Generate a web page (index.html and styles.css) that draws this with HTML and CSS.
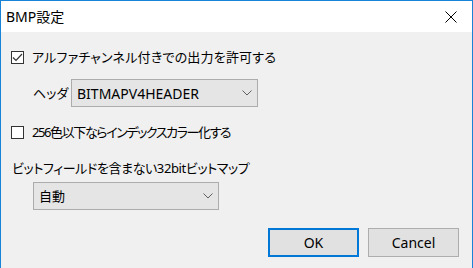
FILE: index.html
```html
<!DOCTYPE html>
<html lang="ja">

<head>
    <meta charset="UTF-8">
    <title>BMP設定</title>
    <link rel="stylesheet" href="styles.css">
</head>

<body>
    <div class="window">
        <div class="titlebar">
            <span class="title">BMP設定</span>
            <svg class="close" width="12" height="12" viewBox="0 0 12 12">
                <path d="M0.5 0.5 L11.5 11.5 M11.5 0.5 L0.5 11.5" stroke="#000" stroke-width="1" fill="none" />
            </svg>
        </div>

        <div class="content">
            <label class="check-row first">
                <span class="checkbox">
                    <svg width="11" height="11" viewBox="0 0 11 11">
                        <path d="M1 5.5 L4 8.5 L10 2" stroke="#333" stroke-width="1.2" fill="none" />
                    </svg>
                </span>
                <span class="text jp alpha">アルファチャンネル付きでの出力を許可する</span>
            </label>

            <div class="field-row">
                <span class="text jp header-label">ヘッダ</span>
                <div class="combo combo-header">
                    <span class="text">BITMAPV4HEADER</span>
                    <svg class="chevron" width="10" height="6" viewBox="0 0 10 6">
                        <path d="M0.5 0.5 L5 5 L9.5 0.5" stroke="#606060" stroke-width="1" fill="none" />
                    </svg>
                </div>
            </div>

            <label class="check-row second">
                <span class="checkbox"></span>
                <span class="text jp index">256色以下ならインデックスカラー化する</span>
            </label>

            <div class="plain-label">
                <span class="text jp bitfield">ビットフィールドを含まない32bitビットマップ</span>
            </div>

            <div class="combo combo-auto">
                <span class="text jp">自動</span>
                <svg class="chevron" width="10" height="6" viewBox="0 0 10 6">
                    <path d="M0.5 0.5 L5 5 L9.5 0.5" stroke="#606060" stroke-width="1" fill="none" />
                </svg>
            </div>

            <div class="buttons">
                <button class="btn default">OK</button>
                <button class="btn">Cancel</button>
            </div>
        </div>
    </div>
</body>

</html>
```

FILE: styles.css
```css
body {
    margin: 0;
    font-family: "Noto Sans", "Noto Sans CJK JP", sans-serif;
    font-size: 14px;
    color: #000;
    background: #f0f0f0;
}

.window {
    width: 473px;
    height: 268px;
    box-sizing: border-box;
    border: 1px solid #1883d7;
    border-bottom: none;
    background: #f0f0f0;
}

.titlebar {
    height: 31px;
    background: #fff;
    display: flex;
    align-items: center;
    justify-content: space-between;
    padding: 0 15px 0 5px;
}

.title {
    font-size: 14px;
    line-height: 18px;
    margin-top: 1px;
    font-feature-settings: "palt";
}

.close {
    margin-top: 1px;
}

.content {
    padding: 16px 13px 0 10px;
}

.text {
    line-height: 19px;
    white-space: nowrap;
}

.jp {
    font-size: 13px;
    font-feature-settings: "palt";
}

.alpha {
    letter-spacing: 0.2px;
}

.index {
    letter-spacing: -1.4px;
}

.bitfield {
    letter-spacing: -0.4px;
}

.check-row {
    display: flex;
    align-items: center;
    height: 19px;
}

.check-row.second {
    margin-top: 16px;
}

.checkbox {
    width: 13px;
    height: 13px;
    box-sizing: border-box;
    border: 1px solid #333;
    background: #fff;
    display: flex;
    align-items: center;
    justify-content: center;
    margin-right: 8px;
}

.field-row {
    display: flex;
    align-items: center;
    margin-top: 12px;
    padding-left: 22px;
}

.header-label {
    width: 38px;
}

.combo {
    box-sizing: border-box;
    height: 28px;
    border: 1px solid #acacac;
    background: #e5e5e5;
    display: flex;
    align-items: center;
    justify-content: space-between;
    padding: 0 5px 0 5px;
}

.combo-header {
    width: 187px;
}

.combo-auto {
    width: 186px;
    margin: 5px 0 0 22px;
}

.plain-label {
    margin-top: 16px;
    padding-left: 1px;
    height: 19px;
}

.buttons {
    display: flex;
    justify-content: flex-end;
    gap: 9px;
    margin-top: 18px;
}

.btn {
    width: 91px;
    height: 29px;
    box-sizing: border-box;
    border: 1px solid #adadad;
    background: #e1e1e1;
    font-family: inherit;
    font-size: 14px;
    color: #000;
    padding: 0;
}

.btn.default {
    border: 2px solid #0078d7;
}
```
